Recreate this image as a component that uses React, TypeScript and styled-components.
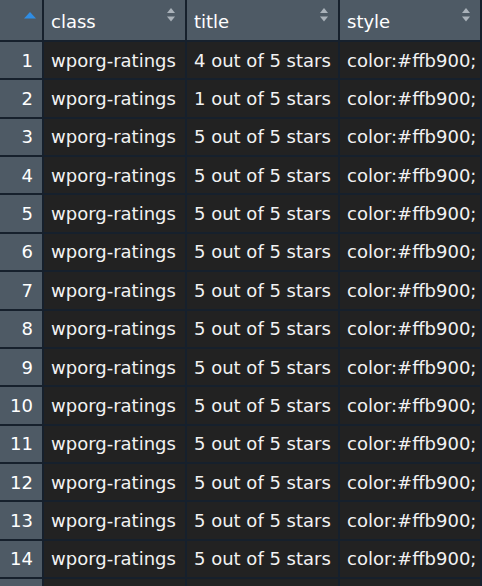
import React from "react";
import styled, { createGlobalStyle } from "styled-components";

const Global = createGlobalStyle`
  html, body { margin: 0; padding: 0; background: #222222; overflow: hidden; }
  body { font-family: "DejaVu Sans", "Liberation Sans", sans-serif; }
`;

const Grid = styled.div`
  display: grid;
  width: 482px;
  grid-template-columns: 42px 141px 151px 140px;
  grid-template-rows: 40px;
  grid-auto-rows: 36.36px;
  gap: 2px;
  padding-right: 2px;
  box-sizing: border-box;
  background: #16202c;
  font-size: 18px;
  color: #f2f2f2;
`;

const HeadCell = styled.div<{ $corner?: boolean }>`
  position: relative;
  background: #4e5a65;
  display: flex;
  align-items: center;
  padding: 3px 0 0 7px;
  box-sizing: border-box;
  color: #ffffff;
  justify-content: ${(p) => (p.$corner ? "center" : "flex-start")};
`;

const IndexCell = styled.div`
  background: #4e5a65;
  display: flex;
  align-items: center;
  justify-content: flex-end;
  padding-right: 9px;
  color: #ffffff;
`;

const Cell = styled.div`
  background: #222222;
  display: flex;
  align-items: center;
  padding-left: 7px;
  white-space: nowrap;
  overflow: hidden;
`;

const SortIcon = styled.svg`
  position: absolute;
  right: 10px;
  top: 8px;
  width: 8px;
  height: 14px;
`;

const CornerIcon = styled.svg`
  position: absolute;
  left: 24px;
  top: 12px;
  width: 12px;
  height: 7px;
`;

const Sort = () => (
  <SortIcon viewBox="0 0 8 14">
    <polygon points="4,0 8,5 0,5" fill="#aab2ba" />
    <polygon points="0,8.5 8,8.5 4,13.5" fill="#aab2ba" />
  </SortIcon>
);

const rows = Array.from({ length: 14 }, (_, i) => ({
  n: i + 1,
  cls: "wporg-ratings",
  title: i === 0 ? "4 out of 5 stars" : i === 1 ? "1 out of 5 stars" : "5 out of 5 stars",
  style: "color:#ffb900;",
}));

export default function App() {
  return (
    <>
      <Global />
      <Grid>
        <HeadCell $corner>
          <CornerIcon viewBox="0 0 12 7">
            <polygon points="6,0 12,6.5 0,6.5" fill="#2f8de4" />
          </CornerIcon>
        </HeadCell>
        <HeadCell>class<Sort /></HeadCell>
        <HeadCell>title<Sort /></HeadCell>
        <HeadCell>style<Sort /></HeadCell>
        {rows.map((r) => (
          <React.Fragment key={r.n}>
            <IndexCell>{r.n}</IndexCell>
            <Cell>{r.cls}</Cell>
            <Cell>{r.title}</Cell>
            <Cell>{r.style}</Cell>
          </React.Fragment>
        ))}
        <IndexCell />
        <Cell />
        <Cell />
        <Cell />
      </Grid>
    </>
  );
}
